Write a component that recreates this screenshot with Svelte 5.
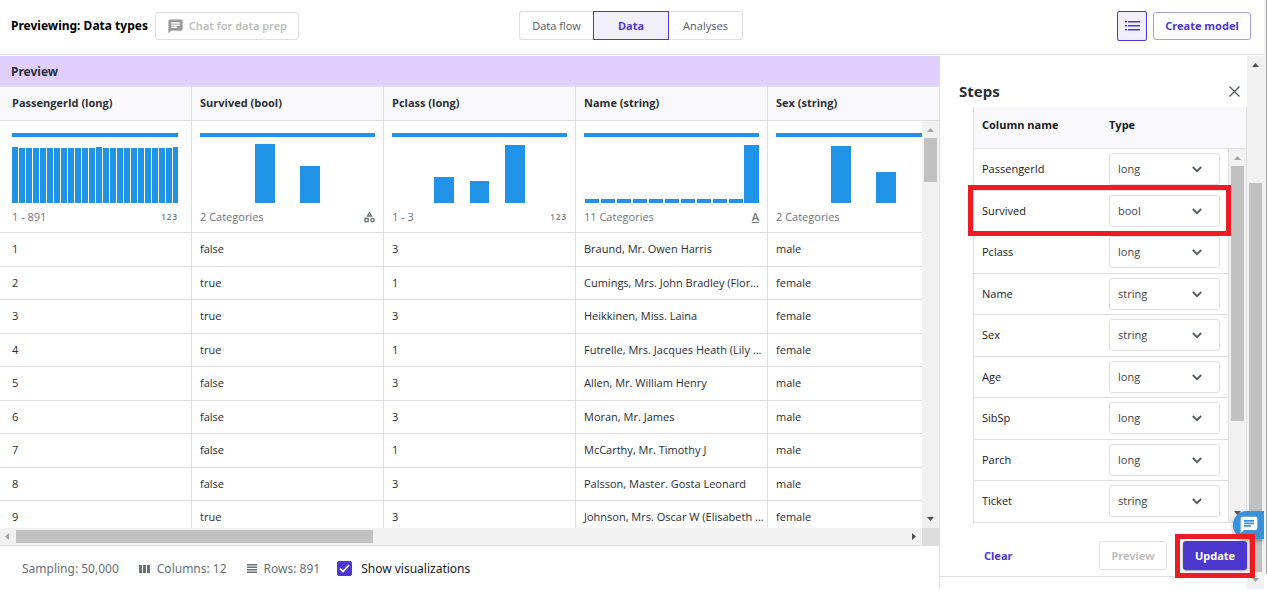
<script>
  const range = (n) => Array.from({ length: n }, (_, i) => i);

  const columns = [
    {
      title: 'PassengerId (long)', caption: '1 - 891', kind: 'number', width: 166,
      bars: range(24).map((i) => ({ x: i * 7, w: i === 23 ? 5 : 6, h: i === 0 || i === 12 || i === 23 ? 56 : 55 }))
    },
    { title: 'Survived (bool)', caption: '2 Categories', kind: 'category', width: 175, bars: [{ x: 55, w: 20, h: 59 }, { x: 100, w: 20, h: 37 }] },
    { title: 'Pclass (long)', caption: '1 - 3', kind: 'number', width: 175, bars: [{ x: 42, w: 20, h: 26 }, { x: 78, w: 19, h: 22 }, { x: 113, w: 20, h: 58 }] },
    {
      title: 'Name (string)', caption: '11 Categories', kind: 'text', width: 175,
      bars: [...range(10).map((i) => ({ x: i * 16 + 1, w: 14, h: 4 })), { x: 160, w: 15, h: 58 }]
    },
    { title: 'Sex (string)', caption: '2 Categories', kind: '', width: 175, bars: [{ x: 55, w: 20, h: 57 }, { x: 100, w: 20, h: 31 }] }
  ];

  const rows = [
    ['1', 'false', '3', 'Braund, Mr. Owen Harris', 'male'],
    ['2', 'true', '1', 'Cumings, Mrs. John Bradley (Flor...', 'female'],
    ['3', 'true', '3', 'Heikkinen, Miss. Laina', 'female'],
    ['4', 'true', '1', 'Futrelle, Mrs. Jacques Heath (Lily ...', 'female'],
    ['5', 'false', '3', 'Allen, Mr. William Henry', 'male'],
    ['6', 'false', '3', 'Moran, Mr. James', 'male'],
    ['7', 'false', '1', 'McCarthy, Mr. Timothy J', 'male'],
    ['8', 'false', '3', 'Palsson, Master. Gosta Leonard', 'male'],
    ['9', 'true', '3', 'Johnson, Mrs. Oscar W (Elisabeth ...', 'female']
  ];

  const types = ['long', 'bool', 'string', 'float'];
  let fields = $state([
    { name: 'PassengerId', type: 'long' },
    { name: 'Survived', type: 'bool', marked: true },
    { name: 'Pclass', type: 'long' },
    { name: 'Name', type: 'string' },
    { name: 'Sex', type: 'string' },
    { name: 'Age', type: 'long' },
    { name: 'SibSp', type: 'long' },
    { name: 'Parch', type: 'long' },
    { name: 'Ticket', type: 'string' }
  ]);
  let showCharts = $state(true);
</script>

{#snippet chatIcon(size)}
  <svg width={size} height={size} viewBox="0 0 24 24" fill="currentColor" aria-hidden="true">
    <path d="M20 2H4c-1.1 0-1.99.9-1.99 2L2 22l4-4h14c1.1 0 2-.9 2-2V4c0-1.1-.9-2-2-2zM6 9h12v2H6V9zm8 5H6v-2h8v2zm4-6H6V6h12v2z" />
  </svg>
{/snippet}

{#snippet arrow(dir)}
  <svg class="arrow" class:dim={dir === 'up-dim' || dir === 'left' || dir === 'down-dim'} width="17" height="17" viewBox="0 0 17 17" aria-hidden="true">
    {#if dir.startsWith('up')}<path d="M5 11h7L8.500 7z" />
    {:else if dir.startsWith('down')}<path d="M5 6h7L8.500 10z" />
    {:else if dir === 'left'}<path d="M9 5v7L5 8.500z" />
    {:else}<path d="M7 5v7L11 8.500z" />{/if}
  </svg>
{/snippet}

<div class="app">
  <header>
    <div class="side">
      <h1>Previewing: Data types</h1>
      <button class="chat-prep" disabled>{@render chatIcon(17)}Chat for data prep</button>
    </div>
    <nav>
      <button>Data flow</button>
      <button class="active">Data</button>
      <button>Analyses</button>
    </nav>
    <div class="side end">
      <button class="steps-toggle" aria-label="Steps">
        <svg width="15" height="10" viewBox="0 0 15 10" fill="currentColor" aria-hidden="true">
          <path d="M0 0h2v1.500H0zM3 0h12v1.500H3zM0 4h2v1.500H0zM3 4h12v1.500H3zM0 8h2v1.500H0zM3 8h12v1.500H3z" />
        </svg>
      </button>
      <button class="create">Create model</button>
    </div>
  </header>

  <main>
    <section class="preview">
      <h2>Preview</h2>
      <div class="grid-wrap">
        <table class="data">
          <thead>
            <tr>{#each columns as c}<th>{c.title}</th>{/each}</tr>
          </thead>
          <tbody>
            {#if showCharts}
              <tr class="charts">
                {#each columns as c}
                  <td>
                    <div class="chart" style="width: {c.width}px">
                      <div class="valid"></div>
                      <svg width={c.width} height="60" aria-hidden="true">
                        {#each c.bars as b}<rect x={b.x} y={60 - b.h} width={b.w} height={b.h} />{/each}
                      </svg>
                      <div class="caption">
                        <span>{c.caption}</span>
                        {#if c.kind === 'number'}
                          <span class="digits">123</span>
                        {:else if c.kind === 'category'}
                          <svg width="11" height="12" viewBox="0 0 11 12" fill="none" stroke="#687078" stroke-width="1.300" aria-hidden="true">
                            <path d="M5.500 1.500L7.500 5h-4zM1 7.500h3.200v3.200H1z" /><circle cx="8.500" cy="9.100" r="1.700" />
                          </svg>
                        {:else if c.kind === 'text'}
                          <span class="letter">A</span>
                        {/if}
                      </div>
                    </div>
                  </td>
                {/each}
              </tr>
            {/if}
            {#each rows as r, i}
              <tr class:short={i % 2 === 1}>{#each r as v}<td>{v}</td>{/each}</tr>
            {/each}
          </tbody>
        </table>
        <div class="vbar">
          {@render arrow('up-dim')}
          <div class="thumb"></div>
          {@render arrow('down')}
        </div>
      </div>
      <div class="hbar">
        {@render arrow('left')}
        <div class="hthumb"></div>
        {@render arrow('right')}
        <div class="corner"></div>
      </div>
      <footer>
        <span>Sampling: 50,000</span>
        <span class="stat cols">
          <svg width="11" height="8" viewBox="0 0 11 8" aria-hidden="true"><path d="M0 0h3v8H0zM4 0h3v8H4zM8 0h3v8H8z" /></svg>Columns: 12
        </span>
        <span class="stat">
          <svg width="10" height="9" viewBox="0 0 10 9" aria-hidden="true"><path d="M0 0h10v1.500H0zM0 2.500h10V4H0zM0 5h10v1.500H0zM0 7.500h10V9H0z" /></svg>Rows: 891
        </span>
        <label>
          <span class="check">
            <input type="checkbox" bind:checked={showCharts} />
            <svg width="15" height="15" viewBox="0 0 15 15" fill="none" stroke="#fff" stroke-width="1.700" aria-hidden="true"><path d="M3 7.500l3 3 6-6.500" /></svg>
          </span>
          Show visualizations
        </label>
      </footer>
    </section>

    <aside>
      <div class="aside-head">
        <h2>Steps</h2>
        <button class="close" aria-label="Close">
          <svg width="11" height="11" viewBox="0 0 11 11" stroke="#545b64" stroke-width="1.400" aria-hidden="true"><path d="M.5.500l10 10M10.500.500l-10 10" /></svg>
        </button>
      </div>
      <div class="fields-wrap">
        <table class="fields">
          <thead><tr><th class="name">Column name</th><th>Type</th></tr></thead>
          <tbody>
            {#each fields as f, i}
              <tr class:short={i % 2 === 1} class:marked={f.marked}>
                <td class="name"><label for="type-{i}">{f.name}</label></td>
                <td>
                  <div class="select">
                    <select id="type-{i}" bind:value={f.type}>
                      {#each types as t}<option>{t}</option>{/each}
                    </select>
                    <svg width="10" height="7" viewBox="0 0 10 7" fill="none" stroke="#545b64" stroke-width="1.800" aria-hidden="true"><path d="M.8 1L5 5.200 9.200 1" /></svg>
                  </div>
                </td>
              </tr>
            {/each}
          </tbody>
        </table>
        <div class="vbar inner">
          {@render arrow('up-dim')}
          <div class="thumb"></div>
          {@render arrow('down')}
        </div>
      </div>
      <div class="actions">
        <button class="clear">Clear</button>
        <button class="ghost" disabled>Preview</button>
        <div class="update"><button>Update</button></div>
      </div>
    </aside>

    <div class="pagebar">
      {@render arrow('up')}
      <div class="thumb"></div>
      {@render arrow('down-dim')}
      <button class="help" aria-label="Chat">{@render chatIcon(20)}</button>
    </div>
  </main>
</div>

<style>
  :global(body) { background: #fff; }
  .app {
    display: flex;
    flex-direction: column;
    box-sizing: border-box;
    height: 100vh;
    padding-bottom: 2px;
    font: 11px/16px "Noto Sans", "Open Sans", sans-serif;
    color: #2a2e33;
    position: relative;
    overflow: hidden;
  }
  .app::after {
    content: "";
    position: absolute;
    top: 0;
    right: 0;
    bottom: 17px;
    width: 2px;
    background: #f1f1f1;
    border-right: 1px solid #a6a6a6;
    box-sizing: content-box;
  }
  h1, h2 { margin: 0; font-size: 12px; line-height: 16px; white-space: nowrap; }
  button, select { font: inherit; margin: 0; box-sizing: border-box; cursor: pointer; }
  button { display: flex; align-items: center; justify-content: center; background: #fff; border: 1px solid #dedfe0; border-radius: 3px; padding: 0; white-space: nowrap; }
  svg { flex: none; display: block; }

  header {
    display: flex;
    align-items: center;
    box-sizing: border-box;
    height: 55px;
    margin: 0 3px 1px 0;
    padding: 0 13px 2px 11px;
    border-bottom: 1px solid #dedfe0;
  }
  .side { flex: 1; display: flex; align-items: center; gap: 7px; }
  .side.end { justify-content: flex-end; gap: 6px; }
  h1 { color: #000; }
  .chat-prep { width: 144px; height: 28px; gap: 5px; color: #bcbcbc; font-weight: 600; }
  .chat-prep :global(svg) { color: #999; }
  nav { display: flex; align-self: flex-start; margin-top: 11px; }
  nav button { height: 29px; width: 74px; color: #545b64; font-family: "Open Sans", sans-serif; }
  nav button:first-child { border-radius: 3px 0 0 3px; border-right: 0; }
  nav button:last-child { border-radius: 0 3px 3px 0; border-left: 0; }
  nav .active { width: 76px; border-color: #4d38cf; border-radius: 0; background: #f2effc; color: #4d38cf; font-weight: 700; }
  .steps-toggle { width: 30px; height: 30px; border-color: #4d38cf; border-radius: 2px; background: #f2effc; color: #4d38cf; }
  .create { width: 98px; height: 28px; border-color: #a99de8; color: #4d38cf; font-weight: 700; }

  main { flex: 1; min-height: 0; display: flex; margin-right: 3px; }
  .preview { flex: 1; min-width: 0; display: flex; flex-direction: column; border-right: 1px solid #dedfe0; }
  .preview h2 { padding: 8px 11px 6px; background: #e0cffe; border-bottom: 1px solid #dedfe0; }
  .grid-wrap { flex: 1; min-height: 0; overflow: hidden; position: relative; background: #f9f9fc; }
  table { border-spacing: 0; table-layout: fixed; font-family: "Open Sans", sans-serif; }
  .data { width: 960px; }
  .data th, .data td {
    box-sizing: border-box;
    width: 192px;
    height: 34px;
    padding: 0 8px 1px;
    text-align: left;
    border-right: 1px solid #dedfe0;
    border-bottom: 1px solid #dedfe0;
    white-space: nowrap;
  }
  .data td { background: #fff; }
  .data th:first-child, .data td:first-child { padding-left: 12px; }
  .data .short td { height: 33px; padding-bottom: 0; }
  .data .charts td { height: 112px; padding-top: 12px; vertical-align: top; }
  .valid { height: 4px; margin-bottom: 6px; background: #2093e6; }
  .chart svg { fill: #2093e6; }
  .caption { display: flex; justify-content: space-between; align-items: center; height: 16px; margin-top: 6px; color: #70767c; }
  .caption svg { fill: none; }
  .digits { font-size: 8px; font-weight: 600; letter-spacing: 1px; }
  .letter { font-weight: 600; text-decoration: underline; }

  .arrow { fill: #505050; }
  .arrow.dim { fill: #a3a3a3; }
  .vbar { position: absolute; top: 34px; right: 0; bottom: 0; width: 17px; display: flex; flex-direction: column; background: #f1f1f1; }
  .thumb { height: 44px; margin: 0 2px auto; background: #c1c1c1; }
  .hbar { display: flex; height: 17px; background: #f1f1f1; border-bottom: 1px solid #dedfe0; }
  .hthumb { width: 38%; height: 13px; margin: 2px auto 0 -1px; background: #c1c1c1; }
  .corner { width: 17px; background: #dcdcdc; }
  footer { display: flex; align-items: center; height: 43px; box-sizing: border-box; padding: 2px 22px 0; font-size: 12px; color: #687078; white-space: nowrap; }
  footer svg { fill: #687078; }
  .stat { display: flex; align-items: center; gap: 7px; margin-left: 20px; }
  footer label { display: flex; align-items: center; gap: 9px; margin-left: 17px; color: #16191f; }
  .check { position: relative; display: flex; }
  .check input { appearance: none; width: 15px; height: 15px; margin: 0; border: 1px solid #4d38cf; border-radius: 2px; }
  .check input:checked { background: #4d38cf; }
  .check svg { position: absolute; inset: 0; fill: none; pointer-events: none; }

  aside { width: 307px; box-sizing: border-box; display: flex; flex-direction: column; padding-top: 25px; }
  .aside-head { display: flex; align-items: center; justify-content: space-between; height: 26px; padding: 0 7px 6px 19px; box-sizing: border-box; }
  aside h2 { font-size: 15px; line-height: 20px; }
  .close { border: 0; background: none; }
  .fields-wrap { flex: 1; min-height: 0; position: relative; margin-left: 33px; border: solid #dedfe0; border-width: 0 1px 1px; background: #f9f9fc; }
  .fields { width: 100%; }
  .fields th, .fields td { box-sizing: border-box; height: 42px; padding: 0 0 1px; text-align: left; border-bottom: 1px solid #dedfe0; }
  .fields th { color: #16191f; height: 42px; padding-bottom: 5px; }
  .fields td { background: #fff; color: #16191f; }
  .fields .short td { height: 41px; padding-bottom: 0; }
  .fields .name { width: 135px; padding-left: 8px; }
  .select { position: relative; width: 111px; }
  select { display: block; appearance: none; width: 100%; height: 32px; padding: 0 8px; border: 1px solid #dedfe0; border-radius: 3px; background: #fff; color: #444; }
  .select svg { position: absolute; right: 18px; top: 13px; pointer-events: none; }
  .marked { position: relative; }
  .marked .name::after { content: ""; position: absolute; z-index: 2; inset: -6px 15px -4px -6px; border: 5px solid #ed1c24; pointer-events: none; }
  .inner { top: 42px; width: 18px; box-sizing: border-box; border-left: 1px solid #dedfe0; }
  .inner .thumb { height: 255px; }
  .actions { display: flex; align-items: center; height: 54px; margin-bottom: 12px; padding: 12px 0 0 44px; border-bottom: 1px solid #dedfe0; box-sizing: border-box; font-weight: 700; }
  .actions button { height: 29px; font-weight: 700; }
  .clear { border: 0; color: #4d38cf; margin-right: auto; background: none; }
  .actions .ghost { width: 68px; color: #bfbfbf; }
  .update { position: relative; z-index: 3; margin: -1px -8px -4px 8px; border: 5px solid #ed1c24; padding: 2px 3px 3px; align-self: flex-start; background: none; }
  .update button { width: 64px; border: 0; background: #4d38cf; color: #fff; box-shadow: 0 1px 3px #0006; }

  .pagebar { position: relative; width: 17px; display: flex; flex-direction: column; background: #f1f1f1; }
  .pagebar .thumb { flex: 1; margin: 110px 2px 0; }
  .help { position: absolute; right: 0; bottom: 50px; width: 31px; height: 28px; border: 0; border-radius: 14px 0 0 14px; background: #3b91d8; color: #fff; box-shadow: 0 2px 4px #0005; }
</style>
